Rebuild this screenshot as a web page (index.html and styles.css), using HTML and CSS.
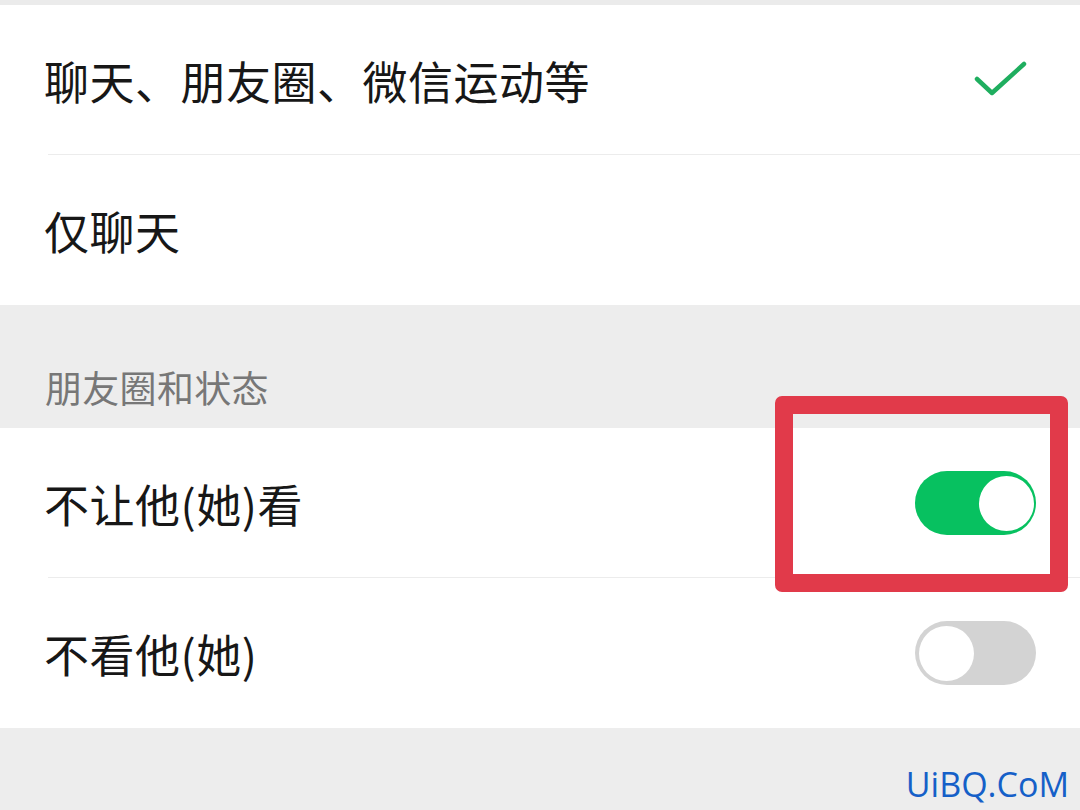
FILE: index.html
```html
<!DOCTYPE html>
<html lang="zh-CN">
<head>
    <meta charset="UTF-8">
    <meta name="viewport" content="width=device-width, initial-scale=1.0">
    <title>朋友权限</title>
    <link rel="stylesheet" href="styles.css">
</head>
<body>
    <div class="topbar"></div>
    <div class="group">
        <div class="row">
            <span class="label">聊天、朋友圈、微信运动等</span>
            <svg class="check" width="58" height="38" viewBox="0 0 58 38">
                <polyline points="5,18 20,32 52,3" fill="none" stroke="#1fae5f" stroke-width="4.5" stroke-linecap="round" stroke-linejoin="round"/>
            </svg>
        </div>
        <div class="row">
            <span class="label">仅聊天</span>
        </div>
    </div>
    <div class="section-title">朋友圈和状态</div>
    <div class="group">
        <div class="row">
            <span class="label">不让他(她)看</span>
            <div class="switch on"><div class="knob"></div></div>
        </div>
        <div class="row">
            <span class="label">不看他(她)</span>
            <div class="switch"><div class="knob"></div></div>
        </div>
    </div>
    <div class="footer">
        <span class="watermark">UiBQ.CoM</span>
    </div>
    <div class="highlight"></div>
</body>
</html>
```

FILE: styles.css
```css
body {
    margin: 0;
    padding: 0;
    width: 1080px;
    height: 810px;
    overflow: hidden;
    position: relative;
    background-color: #ededed;
    font-family: "Noto Sans CJK SC", "Noto Sans", sans-serif;
}
.topbar {
    height: 5px;
    background-color: #ebebeb;
}
.group {
    background: white;
}
.row {
    position: relative;
    height: 150px;
    display: flex;
    align-items: center;
    justify-content: space-between;
    padding: 0 44px 0 44px;
}
.row + .row::before {
    content: "";
    position: absolute;
    top: -1px;
    left: 48px;
    right: 0;
    height: 1px;
    background: #ececec;
}
.group:nth-of-type(3) .row {
    height: 151px;
}
.label {
    font-size: 45px;
    color: #171717;
    line-height: 1;
    letter-spacing: 0.5px;
}
.check {
    margin-right: 6px;
    margin-top: 0;
}
.section-title {
    height: 123px;
    box-sizing: border-box;
    padding: 0 0 22px 45px;
    display: flex;
    align-items: flex-end;
    font-size: 37px;
    color: #777;
    line-height: 1;
    letter-spacing: 0.3px;
}
.switch {
    width: 121px;
    height: 64px;
    border-radius: 32px;
    background-color: #d3d3d3;
    display: flex;
    align-items: center;
    padding: 0 4px;
    box-sizing: border-box;
}
.switch .knob {
    width: 55px;
    height: 55px;
    border-radius: 50%;
    background: white;
}
.switch.on {
    background-color: #07c160;
    justify-content: flex-end;
    padding: 0 2px;
}
.footer {
    height: 80px;
    display: flex;
    align-items: flex-end;
    justify-content: flex-end;
    padding: 0 11px 3px 0;
    box-sizing: border-box;
}
.watermark {
    font-family: "Open Sans", sans-serif;
    font-size: 34px;
    color: #1560c8;
    line-height: 1.2;
}
.highlight {
    position: absolute;
    left: 775px;
    top: 396px;
    width: 293px;
    height: 196px;
    box-sizing: border-box;
    border: 18px solid #e13a4a;
    border-radius: 7px;
}
```
